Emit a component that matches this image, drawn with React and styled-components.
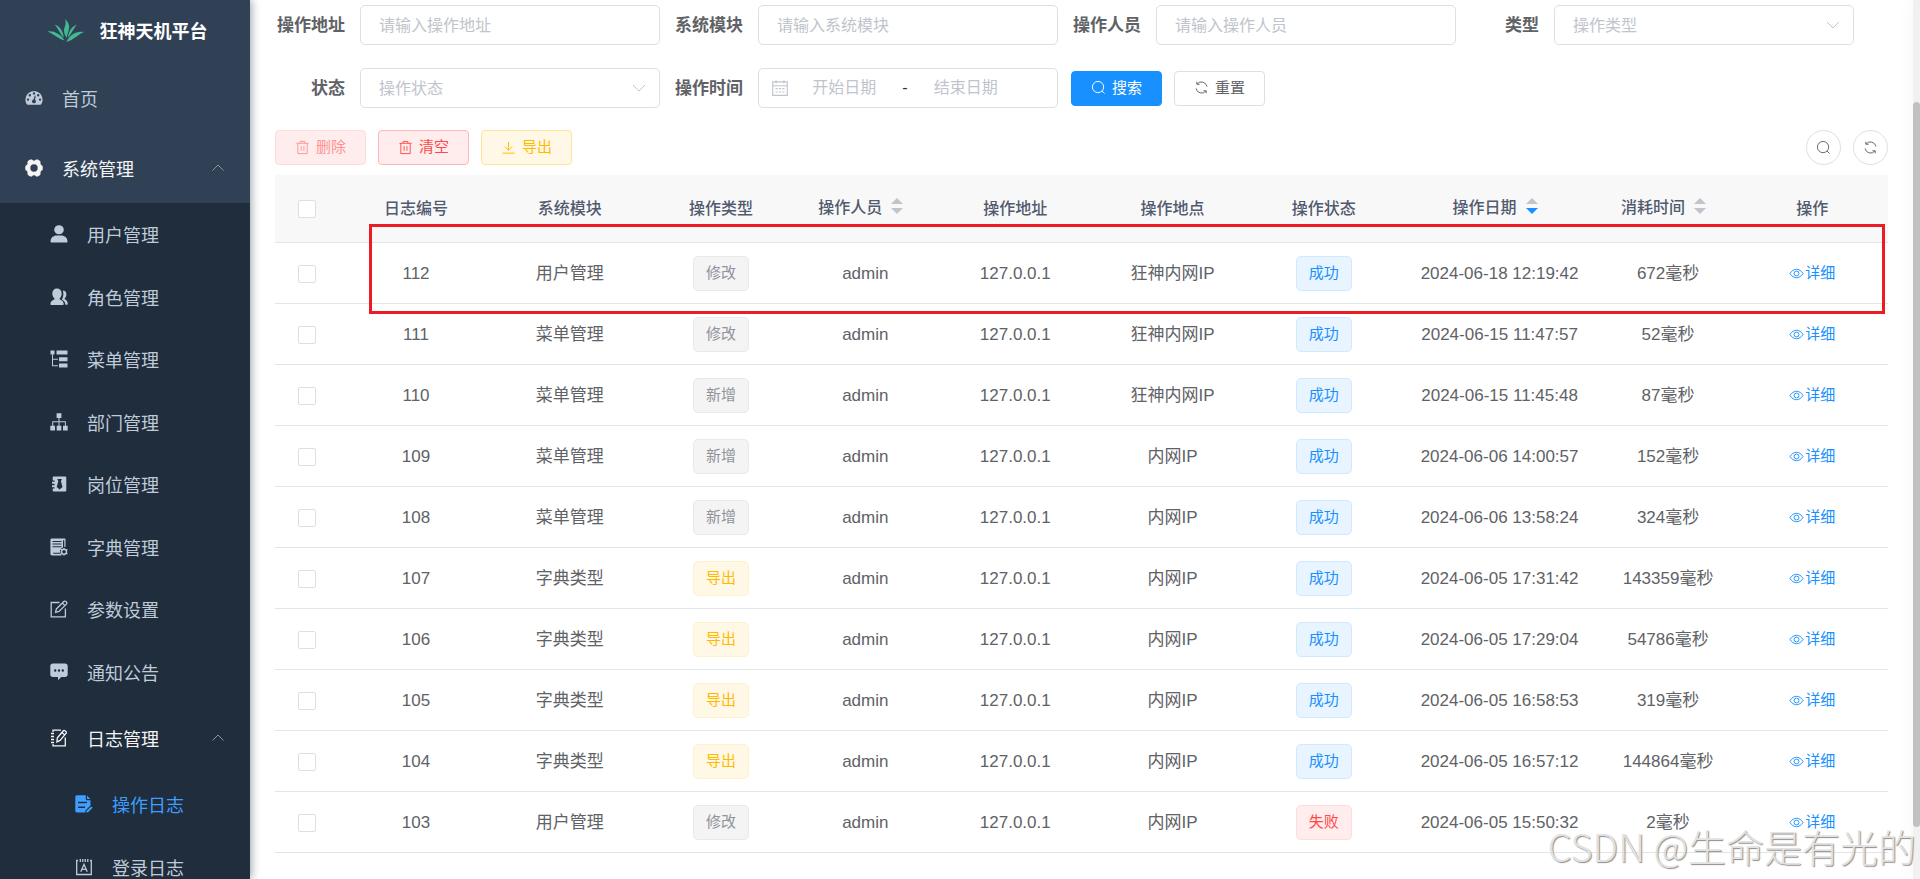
import React from "react";
import styled, { createGlobalStyle, css } from "styled-components";

const menuItems = [
  { label: "用户管理", icon: "user" },
  { label: "角色管理", icon: "peoples" },
  { label: "菜单管理", icon: "treeTable" },
  { label: "部门管理", icon: "tree" },
  { label: "岗位管理", icon: "post" },
  { label: "字典管理", icon: "dict" },
  { label: "参数设置", icon: "edit" },
  { label: "通知公告", icon: "message" },
];

const logs = [
  { id: 112, module: "用户管理", type: "修改", place: "狂神内网IP", ok: true, date: "2024-06-18 12:19:42", cost: 672 },
  { id: 111, module: "菜单管理", type: "修改", place: "狂神内网IP", ok: true, date: "2024-06-15 11:47:57", cost: 52 },
  { id: 110, module: "菜单管理", type: "新增", place: "狂神内网IP", ok: true, date: "2024-06-15 11:45:48", cost: 87 },
  { id: 109, module: "菜单管理", type: "新增", place: "内网IP", ok: true, date: "2024-06-06 14:00:57", cost: 152 },
  { id: 108, module: "菜单管理", type: "新增", place: "内网IP", ok: true, date: "2024-06-06 13:58:24", cost: 324 },
  { id: 107, module: "字典类型", type: "导出", place: "内网IP", ok: true, date: "2024-06-05 17:31:42", cost: 143359 },
  { id: 106, module: "字典类型", type: "导出", place: "内网IP", ok: true, date: "2024-06-05 17:29:04", cost: 54786 },
  { id: 105, module: "字典类型", type: "导出", place: "内网IP", ok: true, date: "2024-06-05 16:58:53", cost: 319 },
  { id: 104, module: "字典类型", type: "导出", place: "内网IP", ok: true, date: "2024-06-05 16:57:12", cost: 144864 },
  { id: 103, module: "用户管理", type: "修改", place: "内网IP", ok: false, date: "2024-06-05 15:50:32", cost: 2 },
];

const columns = [
  { label: "日志编号", width: 156 },
  { label: "系统模块" },
  { label: "操作类型" },
  { label: "操作人员", width: 137, sort: "none" },
  { label: "操作地址", width: 163 },
  { label: "操作地点" },
  { label: "操作状态" },
  { label: "操作日期", width: 200, sort: "desc" },
  { label: "消耗时间", width: 137, sort: "none" },
  { label: "操作" },
];

const icons = {
  dashboard: (
    <path
      fill="currentColor"
      fillRule="evenodd"
      d="M9 2a8.6 8.6 0 0 0-8.600 8.600c0 1.700.4 3.200 1.200 4.500.2.400.6.600 1 .600h12.800c.4 0 .8-.2 1-.6.8-1.300 1.200-2.800 1.200-4.500A8.600 8.600 0 0 0 9 2zM9 3.200a1.200 1.200 0 1 1 0 2.400 1.200 1.200 0 0 1 0-2.400zM4.800 5a1.200 1.200 0 1 1 0 2.400 1.200 1.200 0 0 1 0-2.400zM13.200 5a1.200 1.200 0 1 1 0 2.400 1.200 1.200 0 0 1 0-2.400zM3 9.400a1.200 1.200 0 1 1 0 2.400 1.200 1.200 0 0 1 0-2.400zM15 9.400a1.200 1.200 0 1 1 0 2.400 1.200 1.200 0 0 1 0-2.400zM9.800 6.600l.9.200-.6 3.900a2 2 0 1 1-1.500-.300z"
    />
  ),
  system: (
    <path
      fill="currentColor"
      fillRule="evenodd"
      d="M5.200.6h1.700c.5.700 1.200 1.100 2.100 1.100s1.600-.4 2.100-1.100h1.700l2.300 1.500.5 1.200c-.3.800-.2 1.600.200 2.300.4.700 1 1.100 1.700 1.200l.3 2.200-.3 2.200c-.7.100-1.300.5-1.700 1.200-.4.700-.5 1.500-.2 2.300l-.5 1.200-2.300 1.500h-1.700c-.5-.7-1.200-1.100-2.100-1.100s-1.600.4-2.100 1.100H5.200l-2.300-1.500-.5-1.200c.3-.8.200-1.600-.2-2.300-.4-.7-1-1.100-1.700-1.200L.2 9l.3-2.200c.7-.1 1.300-.5 1.700-1.200.4-.7.5-1.500.2-2.300l.5-1.200zM9 5.300a3.700 3.700 0 1 0 0 7.400 3.700 3.700 0 0 0 0-7.400z"
    />
  ),
  user: (
    <g fill="currentColor">
      <ellipse cx="9" cy="4.800" rx="4.800" ry="4.500" />
      <path d="M.5 16.500c0-3.800 3-6 6-6h5c3 0 6 2.200 6 6 0 .7-.5 1-1 1h-15c-.5 0-1-.3-1-1z" />
    </g>
  ),
  peoples: (
    <g fill="currentColor">
      <path d="M7 .5c2.900 0 4.700 2 4.700 5 0 2-.8 3.900-2.100 4.900v.8c1.600.8 3.900 1.800 4.100 4.600 0 .8-.3 1.200-1 1.200H1.400c-.6 0-1-.4-1-1.200.2-2.800 2.600-3.800 4.100-4.600v-.8C3.100 9.400 2.300 7.500 2.300 5.500c0-3 1.800-5 4.700-5z" />
      <path d="M12.800 2.600c2.300 0 3.600 1.500 3.600 3.800 0 1.700-.7 3.200-1.800 4.100v.6c1.500.8 3.200 2.200 3.200 4.700 0 .6-.3.900-.8.900h-1.600c-.2-2.600-1.700-4-3.600-5.100 1.400-1.600 2.100-5.800 1-9z" />
    </g>
  ),
  treeTable: (
    <g fill="currentColor">
      <path d="M.5.500h4v4h-4zM6.500.500h11v4h-11zM9 7.200h8.500v4H9zM9 13.500h8.500v4H9z" />
      <path d="M2 4.500h1v4.200h5v1H3v5.500h5v1H2z" />
    </g>
  ),
  tree: (
    <g fill="currentColor">
      <path d="M6.600.300h4.800v4.800H6.600zM.300 12.800h4.700v4.700H.300zM6.700 12.800h4.600v4.700H6.700zM13 12.800h4.700v4.700H13z" />
      <path d="M8.500 5h1v3.200h6.400v4.800h-1V9.200H9.500V13h-1V9.200H3.200V13h-1V8.200h6.300z" />
    </g>
  ),
  post: (
    <path
      fill="currentColor"
      fillRule="evenodd"
      d="M4 1.500h11c.8 0 1.300.5 1.300 1.300v12.400c0 .8-.5 1.300-1.300 1.300H4c-.8 0-1.300-.5-1.300-1.300v-1.700H4.500v-1.200H2v-2H4.500V8.800H2v-2H4.500V5.500H2.700V2.800c0-.8.5-1.300 1.300-1.300zM7.300 4l1 2.200-1.600 5.800 2.900 2.500 2.900-2.500L10.900 6.200l1-2.200z"
    />
  ),
  dict: (
    <g fill="currentColor">
      <path fillRule="evenodd" d="M2 .5h12.500c.6 0 1 .4 1 1v7.200l-1.200.2V2.300H13v7.200c-2.300.7-3.500 3-2.700 5.300H3.200v1h7.600l1 1.600H2c-.9 0-1.600-.7-1.600-1.600V2C.4 1.100 1.100.5 2 .5zM2.500 3v1h9V3zM2.500 5.600v1h9v-1zM2.500 8.200v1h9v-1z" />
      <circle cx="14" cy="13.700" r="2.500" fill="none" stroke="currentColor" strokeWidth="1.400" />
      <path d="M13.400 10h1.200v1.500h-1.200zM13.400 16h1.200v1.500h-1.200zM10.400 11.800l.6-1 1.400.8-.6 1zM15.800 15.600l.6-1 1.400.8-.6 1zM10.400 15.500l1.400-.9.600 1-1.400.9zM15.800 11.700l1.300-.8.600 1-1.300.8z" />
    </g>
  ),
  edit: (
    <g fill="none" stroke="currentColor" strokeWidth="1.300">
      <path d="M9.500 2.500H1.200v14.300h14.200V8.500" />
      <path d="M6.300 9l7.500-7.500c.6-.6 1.500-.6 2.100 0l.5.500c.6.600.6 1.500 0 2.100L9 11.500l-3.400.8zM12.300 3l2.600 2.600" />
    </g>
  ),
  message: (
    <path
      fill="currentColor"
      fillRule="evenodd"
      d="M3 .5h12c1.700 0 2.700 1 2.700 2.700v8c0 1.700-1 2.700-2.700 2.700h-3.800L8 17.300v-3.400H3c-1.700 0-2.700-1-2.700-2.700v-8C.3 1.500 1.300.5 3 .5zM5.200 6.300a1.200 1.200 0 1 0 0 2.400 1.200 1.200 0 0 0 0-2.400zM9 6.300a1.200 1.200 0 1 0 0 2.400 1.200 1.200 0 0 0 0-2.400zM12.800 6.300a1.200 1.200 0 1 0 0 2.400 1.200 1.200 0 0 0 0-2.400z"
    />
  ),
  log: (
    <g fill="none" stroke="currentColor" strokeWidth="1.300">
      <path d="M11 1.200H3V3M3 15v1.800h12.300V8.500" />
      <path d="M1 4.500h3M1 7.500h3M1 10.500h3M1 13.500h3" />
      <path d="M7.300 9l5.800-7c.5-.6 1.300-.7 1.900-.2l.9.700c.6.500.6 1.300.1 1.900l-5.900 7-3.200 1.500zM12 3.500l2.900 2.400" />
    </g>
  ),
  form: (
    <path
      fill="currentColor"
      fillRule="evenodd"
      d="M2 .3h8.800V4c0 .7.500 1.200 1.200 1.200h3.500v5.300l-5 5-.4 2H2c-1 0-1.700-.7-1.700-1.700V2C.3 1 1 .3 2 .3zM12 .500l3.300 3.500H12zM3 6.800v1.500h9V6.800zM3 11.600v1.500h7v-1.500zM16.300 11.500l1.400 1.300-4.600 4.400-2 .4.500-1.900z"
    />
  ),
  logininfor: (
    <g fill="none" stroke="currentColor" strokeWidth="1.300">
      <path d="M3 2.500H1.700v14h14.600v-14H15M5.300 1v3M7.800 1v3M10.300 1v3M12.800 1v3" />
      <path d="M5.800 13.800L9 6.300l3.200 7.500M7 11.300h4" />
    </g>
  ),
};

const SideIcon = ({ name }) => (
  <svg width="18" height="18" viewBox="0 0 18 18" aria-hidden="true">
    {icons[name]}
  </svg>
);

const Glyph = ({ size = 15, children }) => (
  <svg
    width={size}
    height={size}
    viewBox="0 0 16 16"
    fill="none"
    stroke="currentColor"
    strokeWidth="1"
    aria-hidden="true"
  >
    {children}
  </svg>
);

const SearchGlyph = () => (
  <Glyph>
    <circle cx="7.500" cy="7.500" r="6" />
    <path d="M11.800 11.800l2.700 2.700" />
  </Glyph>
);

const RefreshGlyph = () => (
  <Glyph>
    <path d="M3 4.500h3M3 4.500V1.800M3.300 4.200A6 6 0 0 1 13.800 7M13 11.500h-3M13 11.500v2.700M12.700 11.800A6 6 0 0 1 2.200 9" />
  </Glyph>
);

const TrashGlyph = () => (
  <Glyph>
    <path d="M1.500 3.500h13M5.500 3.500v-2h5v2M3 3.500v11h10v-11M6.500 6.500v5M9.500 6.500v5" />
  </Glyph>
);

const DownloadGlyph = () => (
  <Glyph>
    <path d="M8 2v8.500M4 7l4 4 4-4M1.500 14h13" />
  </Glyph>
);

const EyeGlyph = () => (
  <Glyph>
    <path d="M1 8c3.800-6 10.200-6 14 0-3.800 6-10.200 6-14 0z" />
    <circle cx="8" cy="8" r="2.600" />
  </Glyph>
);

const CalendarGlyph = () => (
  <Glyph size={18}>
    <path d="M1.500 2.500h13v12h-13zM1.500 6h13M4.500 1v3M11.500 1v3M4 8.500h2M7 8.500h2M10 8.500h2M4 11.500h2M7 11.500h2M10 11.500h2" />
  </Glyph>
);

const ArrowGlyph = ({ up }) => (
  <Glyph size={16}>
    <path d={up ? "M2.500 10.500L8 5l5.500 5.500" : "M2 5l6 6 6-6"} />
  </Glyph>
);

const Logo = () => (
  <svg width="38" height="26" viewBox="0 0 38 26" fill="#42b991" aria-hidden="true">
    <path d="M18 0c4 4 5 7 3.500 12-.8 2.600-1.600 4.300-2 7-2-4-3.300-7-2-10.500C18.500 5.500 19.300 3.500 18 0z" />
    <path d="M7.500 5.500c4.700 1.500 8.300 5.500 9.300 13C13.500 16 11.300 9.500 7.500 5.500z" />
    <path d="M30 5.500c-4.500 1.500-8 5.800-9.300 13C24 16 26.500 9.500 30 5.500z" />
    <path d="M.5 12.500c6.500-1 13 2.500 17 9C11.500 20 6.500 14.800.5 12.500z" />
    <path d="M37 13c-7-1.500-14.500 2.500-17.500 10 7-2 11.500-7.500 17.500-10z" />
  </svg>
);

export default function App() {
  return (
    <>
      <GlobalStyle />
      <Layout>
        <Sidebar>
          <Brand href="#">
            <Logo />
            <BrandName>狂神天机平台</BrandName>
          </Brand>
          <MenuTitle href="#">
            <SideIcon name="dashboard" />
            首页
          </MenuTitle>
          <MenuTitle href="#" $open>
            <SideIcon name="system" />
            系统管理
            <MenuArrow>
              <ArrowGlyph up />
            </MenuArrow>
          </MenuTitle>
          <SubMenu>
            {menuItems.map((item) => (
              <MenuItem key={item.label} href="#">
                <SideIcon name={item.icon} />
                {item.label}
              </MenuItem>
            ))}
          </SubMenu>
          <SubPanel>
            <MenuTitle href="#" $open $nested>
              <SideIcon name="log" />
              日志管理
              <MenuArrow>
                <ArrowGlyph up />
              </MenuArrow>
            </MenuTitle>
            <SubMenu>
              <MenuItem href="#" $deep $active>
                <SideIcon name="form" />
                操作日志
              </MenuItem>
              <MenuItem href="#" $deep>
                <SideIcon name="logininfor" />
                登录日志
              </MenuItem>
            </SubMenu>
          </SubPanel>
        </Sidebar>

        <Main>
          <SearchForm onSubmit={(e) => e.preventDefault()}>
            <FormItem>
              <Label htmlFor="operIp">操作地址</Label>
              <Input id="operIp" placeholder="请输入操作地址" />
            </FormItem>
            <FormItem>
              <Label htmlFor="title">系统模块</Label>
              <Input id="title" placeholder="请输入系统模块" />
            </FormItem>
            <FormItem>
              <Label htmlFor="operName">操作人员</Label>
              <Input id="operName" placeholder="请输入操作人员" />
            </FormItem>
            <FormItem>
              <Label htmlFor="businessType">类型</Label>
              <SelectBox>
                <Select id="businessType">
                  <option>操作类型</option>
                </Select>
                <ArrowGlyph />
              </SelectBox>
            </FormItem>
            <FormItem>
              <Label htmlFor="status">状态</Label>
              <SelectBox>
                <Select id="status">
                  <option>操作状态</option>
                </Select>
                <ArrowGlyph />
              </SelectBox>
            </FormItem>
            <FormItem>
              <Label htmlFor="beginTime">操作时间</Label>
              <DateRange>
                <CalendarGlyph />
                <DateInput id="beginTime" placeholder="开始日期" />
                <span>-</span>
                <DateInput aria-label="结束日期" placeholder="结束日期" />
              </DateRange>
            </FormItem>
            <Actions>
              <Button $kind="primary">
                <SearchGlyph />
                搜索
              </Button>
              <Button type="button">
                <RefreshGlyph />
                重置
              </Button>
            </Actions>
          </SearchForm>

          <Toolbar>
            <Button $kind="danger" disabled>
              <TrashGlyph />
              删除
            </Button>
            <Button $kind="danger">
              <TrashGlyph />
              清空
            </Button>
            <Button $kind="warning">
              <DownloadGlyph />
              导出
            </Button>
            <ToolbarRight>
              <RoundButton aria-label="搜索">
                <SearchGlyph />
              </RoundButton>
              <RoundButton aria-label="刷新">
                <RefreshGlyph />
              </RoundButton>
            </ToolbarRight>
          </Toolbar>

          <TableWrap>
            <Table>
              <thead>
                <tr>
                  <Th $width={63}>
                    <Checkbox aria-label="全选" />
                  </Th>
                  {columns.map((col) => (
                    <Th key={col.label} $width={col.width}>
                      <HeadCell $sortable={col.sort}>
                        {col.label}
                        {col.sort && (
                          <Carets $sort={col.sort} width="12" height="16" viewBox="0 0 12 16">
                            <path d="M6 0l6 6H0z" />
                            <path d="M0 10h12l-6 6z" />
                          </Carets>
                        )}
                      </HeadCell>
                    </Th>
                  ))}
                </tr>
              </thead>
              <tbody>
                {logs.map((log) => (
                  <tr key={log.id}>
                    <Td>
                      <Checkbox aria-label={`选择 ${log.id}`} />
                    </Td>
                    <Td>{log.id}</Td>
                    <Td>{log.module}</Td>
                    <Td>
                      <Tag $kind={log.type === "导出" ? "warning" : "info"}>{log.type}</Tag>
                    </Td>
                    <Td>admin</Td>
                    <Td>127.0.0.1</Td>
                    <Td>{log.place}</Td>
                    <Td>
                      <Tag $kind={log.ok ? "primary" : "danger"}>{log.ok ? "成功" : "失败"}</Tag>
                    </Td>
                    <Td>{log.date}</Td>
                    <Td>{log.cost}毫秒</Td>
                    <Td>
                      <TextButton>
                        <EyeGlyph />
                        详细
                      </TextButton>
                    </Td>
                  </tr>
                ))}
              </tbody>
            </Table>
            <Highlight />
          </TableWrap>
        </Main>

        <Scrollbar>
          <Thumb />
        </Scrollbar>
        <Watermark>CSDN @生命是有光的</Watermark>
      </Layout>
    </>
  );
}

const GlobalStyle = createGlobalStyle`
  * {
    box-sizing: border-box;
  }
  body {
    margin: 0;
    overflow: hidden;
    background: #fff;
    color: #606266;
  }
  body, button, input, select {
    font-family: "Liberation Sans", "Noto Sans CJK SC", sans-serif;
  }
  svg {
    flex: none;
  }
`;

const Layout = styled.div`
  position: relative;
  display: flex;
  height: 100vh;
  overflow: hidden;
`;

/* sidebar */
const Sidebar = styled.nav`
  width: 250px;
  flex: none;
  overflow: hidden;
  background: #304156;
  box-shadow: 2px 0 8px rgba(0, 21, 41, 0.35);
`;
const Brand = styled.a`
  display: flex;
  align-items: center;
  justify-content: center;
  gap: 15px;
  height: 63px;
  padding-left: 4px;
  text-decoration: none;
`;
const BrandName = styled.h1`
  margin: 0;
  font-size: 18px;
  font-weight: 700;
  line-height: 62px;
  color: #fff;
`;
const MenuTitle = styled.a`
  display: flex;
  align-items: center;
  gap: 19px;
  height: 70px;
  padding: 0 24px 0 ${(p) => (p.$nested ? 50 : 25)}px;
  font-size: 18px;
  text-decoration: none;
  color: ${(p) => (p.$open ? "#f4f4f5" : "#bfcbd9")};
`;
const MenuArrow = styled.span`
  display: flex;
  margin-left: auto;
  color: #909399;
`;
const SubMenu = styled.div`
  display: grid;
  grid-auto-rows: 62px 63px;
  background: #1f2d3d;
`;
const SubPanel = styled.div`
  background: #1f2d3d;
`;
const MenuItem = styled.a`
  display: flex;
  align-items: center;
  gap: 19px;
  padding-left: ${(p) => (p.$deep ? 75 : 50)}px;
  font-size: 18px;
  text-decoration: none;
  color: ${(p) => (p.$active ? "#409eff" : "#bfcbd9")};
`;

/* search form */
const Main = styled.main`
  flex: 1;
  min-width: 0;
  padding: 5px 25px 0;
`;
const SearchForm = styled.form`
  display: flex;
  flex-wrap: wrap;
  gap: 23px 13px;
`;
const FormItem = styled.div`
  display: flex;
  align-items: center;
`;
const Label = styled.label`
  width: 85px;
  padding: 2px 15px 0 0;
  text-align: right;
  font-size: 17px;
  font-weight: 700;
  line-height: 38px;
  white-space: nowrap;
`;
const field = css`
  width: 300px;
  height: 40px;
  border: 1px solid #dcdfe6;
  border-radius: 5px;
  background: #fff;
  font-size: 16px;
`;
const Input = styled.input`
  ${field}
  padding: 2px 18px 0;
  color: #606266;
  outline: none;
  &::placeholder {
    color: #c0c4cc;
  }
`;
const SelectBox = styled.div`
  ${field}
  display: flex;
  align-items: center;
  padding-right: 12px;
  color: #c0c4cc;
`;
const Select = styled.select`
  flex: 1;
  height: 38px;
  padding: 0 18px;
  border: 0;
  outline: none;
  appearance: none;
  background: transparent;
  font-size: 16px;
  color: #c0c4cc;
`;
const DateRange = styled.div`
  ${field}
  display: flex;
  align-items: center;
  padding: 0 36px 0 12px;
  color: #c0c4cc;
  span {
    padding: 0 3px;
    color: #303133;
  }
`;
const DateInput = styled.input`
  flex: 1;
  min-width: 0;
  border: 0;
  outline: none;
  text-align: center;
  font-size: 16px;
  &::placeholder {
    color: #c0c4cc;
  }
`;
const Actions = styled.div`
  display: flex;
  align-items: center;
  gap: 12px;
`;

const kinds = {
  default: { bg: "#fff", border: "#dcdfe6", color: "#606266" },
  primary: { bg: "#1890ff", border: "#1890ff", color: "#fff" },
  danger: { bg: "#ffeded", border: "#ffb6b6", color: "#ff4949" },
  warning: { bg: "#fff8e6", border: "#ffe399", color: "#ffba00" },
};
const Button = styled.button`
  display: flex;
  align-items: center;
  gap: 6px;
  height: 35px;
  padding: 0 19px 1px;
  border: 1px solid ${(p) => kinds[p.$kind || "default"].border};
  border-radius: 4px;
  background: ${(p) => kinds[p.$kind || "default"].bg};
  color: ${(p) => kinds[p.$kind || "default"].color};
  font-size: 15px;
  line-height: 20px;
  cursor: pointer;
  &:disabled {
    border-color: #ffdbdb;
    color: #ff9292;
    cursor: not-allowed;
  }
`;
const Toolbar = styled.div`
  display: flex;
  align-items: center;
  gap: 12px;
  padding: 22px 0 10px;
`;
const ToolbarRight = styled.div`
  display: flex;
  gap: 12px;
  margin-left: auto;
`;
const RoundButton = styled.button`
  display: flex;
  align-items: center;
  justify-content: center;
  width: 35px;
  height: 35px;
  padding: 0;
  border: 1px solid #dcdfe6;
  border-radius: 50%;
  background: #fff;
  color: #606266;
`;

/* table */
const TableWrap = styled.div`
  position: relative;
`;
const Table = styled.table`
  width: 100%;
  table-layout: fixed;
  border-collapse: separate;
  border-spacing: 0;
`;
const Th = styled.th`
  width: ${(p) => (p.$width ? `${p.$width}px` : "auto")};
  height: 68px;
  padding: 0;
  border-bottom: 1px solid #dfe6ec;
  background: #f8f8f9;
  color: #515a6e;
  font-size: 16px;
  font-weight: 500;
`;
const HeadCell = styled.div`
  display: flex;
  align-items: center;
  justify-content: center;
  gap: 9px;
  padding-bottom: ${(p) => (p.$sortable ? 5 : 3)}px;
`;
const Carets = styled.svg`
  margin-right: 9px;
  fill: #c0c4cc;
  path:last-child {
    fill: ${(p) => (p.$sort === "desc" ? "#1890ff" : "#c0c4cc")};
  }
`;
const Td = styled.td`
  height: 61px;
  padding: 1px 0 0;
  border-bottom: 1px solid #dfe6ec;
  text-align: center;
  font-size: 17px;
  line-height: 28px;
`;
const Checkbox = styled.input.attrs({ type: "checkbox" })`
  display: block;
  width: 18px;
  height: 18px;
  margin: 0 auto;
  appearance: none;
  border: 1px solid #dcdfe6;
  border-radius: 2px;
  background: #fff;
`;
const tags = {
  info: { bg: "#f4f4f5", border: "#e9e9eb", color: "#909399" },
  warning: { bg: "#fff8e6", border: "#fff1cc", color: "#ffba00" },
  primary: { bg: "#e8f4ff", border: "#d1e9ff", color: "#1890ff" },
  danger: { bg: "#ffeded", border: "#ffdbdb", color: "#ff4949" },
};
const Tag = styled.span`
  display: inline-block;
  height: 35px;
  padding: 0 12px;
  border: 1px solid ${(p) => tags[p.$kind].border};
  border-radius: 5px;
  background: ${(p) => tags[p.$kind].bg};
  color: ${(p) => tags[p.$kind].color};
  font-size: 15px;
  line-height: 32px;
  vertical-align: middle;
`;
const TextButton = styled.button`
  display: inline-flex;
  align-items: center;
  gap: 1px;
  padding: 0 0 2px;
  border: 0;
  background: transparent;
  color: #1890ff;
  font-size: 15px;
  line-height: 20px;
  vertical-align: middle;
`;

/* frame drawn over the newest record */
const Highlight = styled.div`
  position: absolute;
  top: 49px;
  right: 3px;
  left: 94px;
  height: 90px;
  border: 3px solid #ed1c24;
  pointer-events: none;
`;

const Scrollbar = styled.div`
  display: grid;
  grid-template-rows: 102fr 725fr 52fr;
  width: 7px;
  flex: none;
  background: #f1f1f1;
  box-shadow: 0 0 18px rgba(0, 0, 0, 0.06);
`;
const Thumb = styled.div`
  grid-row: 2;
  border-radius: 4px;
  background: #c1c1c1;
`;
const Watermark = styled.div`
  position: absolute;
  right: 4px;
  bottom: 6px;
  font-family: "Noto Sans CJK SC", sans-serif;
  font-size: 38px;
  font-weight: 300;
  line-height: 54px;
  color: #e2e2e2;
  text-shadow: 1px 1px 1px #8c8c8c;
  pointer-events: none;
`;
